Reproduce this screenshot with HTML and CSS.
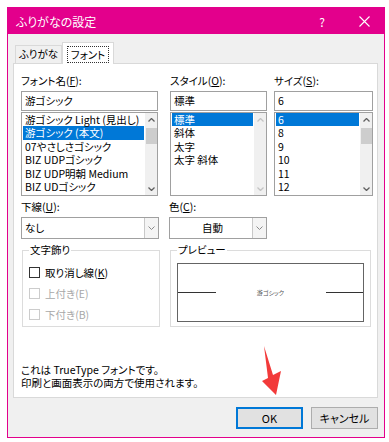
FILE: index.html
```html
<!DOCTYPE html>
<html lang="ja">
  <head>
    <meta charset="UTF-8" />
    <title>ふりがなの設定</title>
    <link rel="stylesheet" href="styles.css">
  </head>
  <body>
    <div class="window">
      <div class="titlebar">
        <span class="title">ふりがなの設定</span>
        <span class="help">?</span>
        <svg class="close" width="11" height="11" viewBox="0 0 11 11">
          <path d="M0.5 0.5 L10.5 10.5 M10.5 0.5 L0.5 10.5" stroke="#fff" stroke-width="1.1" fill="none" />
        </svg>
      </div>

      <div class="body">
        <div class="tabs">
          <div class="tab">ふりがな</div>
          <div class="tab active"><span class="focus">フォント</span></div>
        </div>

        <div class="panel">
          <div class="pickers">
            <div class="col col-font">
              <div class="lbl">フォント名(<u>F</u>):</div>
              <div class="input">游ゴシック</div>
              <div class="listbox">
                <div class="items">
                  <div class="item">游ゴシック Light (見出し)</div>
                  <div class="item sel">游ゴシック (本文)</div>
                  <div class="item">07やさしさゴシック</div>
                  <div class="item">BIZ UDPゴシック</div>
                  <div class="item">BIZ UDP明朝 Medium</div>
                  <div class="item">BIZ UDゴシック</div>
                </div>
                <div class="scroll">
                  <svg class="chev" viewBox="0 0 7 4"><path d="M0.5 3.5 L3.5 0.5 L6.5 3.5" /></svg>
                  <div class="thumb"></div>
                  <div class="spacer"></div>
                  <svg class="chev" viewBox="0 0 7 4"><path d="M0.5 0.5 L3.5 3.5 L6.5 0.5" /></svg>
                </div>
              </div>
            </div>

            <div class="col col-style">
              <div class="lbl">スタイル(<u>O</u>):</div>
              <div class="input">標準</div>
              <div class="listbox">
                <div class="items">
                  <div class="item sel">標準</div>
                  <div class="item">斜体</div>
                  <div class="item">太字</div>
                  <div class="item">太字 斜体</div>
                </div>
                <div class="scroll off">
                  <svg class="chev" viewBox="0 0 7 4"><path d="M0.5 3.5 L3.5 0.5 L6.5 3.5" /></svg>
                  <div class="spacer"></div>
                  <svg class="chev" viewBox="0 0 7 4"><path d="M0.5 0.5 L3.5 3.5 L6.5 0.5" /></svg>
                </div>
              </div>
            </div>

            <div class="col col-size">
              <div class="lbl">サイズ(<u>S</u>):</div>
              <div class="input">6</div>
              <div class="listbox">
                <div class="items">
                  <div class="item sel">6</div>
                  <div class="item">8</div>
                  <div class="item">9</div>
                  <div class="item">10</div>
                  <div class="item">11</div>
                  <div class="item">12</div>
                </div>
                <div class="scroll">
                  <svg class="chev" viewBox="0 0 7 4"><path d="M0.5 3.5 L3.5 0.5 L6.5 3.5" /></svg>
                  <div class="thumb"></div>
                  <div class="spacer"></div>
                  <svg class="chev" viewBox="0 0 7 4"><path d="M0.5 0.5 L3.5 3.5 L6.5 0.5" /></svg>
                </div>
              </div>
            </div>
          </div>

          <div class="combos">
            <div class="col col-under">
              <div class="lbl">下線(<u>U</u>):</div>
              <div class="drop">
                <span class="drop-text">なし</span>
                <span class="drop-btn"><svg class="chev" viewBox="0 0 7 4"><path d="M0.5 0.5 L3.5 3.5 L6.5 0.5" /></svg></span>
              </div>
            </div>
            <div class="col col-color">
              <div class="lbl">色(<u>C</u>):</div>
              <div class="drop">
                <span class="drop-text center">自動</span>
                <span class="drop-btn"><svg class="chev" viewBox="0 0 7 4"><path d="M0.5 0.5 L3.5 3.5 L6.5 0.5" /></svg></span>
              </div>
            </div>
          </div>

          <div class="groups">
            <fieldset class="group group-deco">
              <legend>文字飾り</legend>
              <div class="checks">
                <label class="check"><span class="box"></span>取り消し線(<u>K</u>)</label>
                <label class="check off"><span class="box"></span>上付き(E)</label>
                <label class="check off"><span class="box"></span>下付き(B)</label>
              </div>
            </fieldset>
            <fieldset class="group group-preview">
              <legend>プレビュー</legend>
              <div class="preview">
                <span class="rule"></span>
                <span class="sample">游ゴシック</span>
                <span class="rule"></span>
              </div>
            </fieldset>
          </div>

          <p class="note">これは TrueType フォントです。<br>印刷と画面表示の両方で使用されます。</p>
        </div>

        <div class="actions">
          <button class="btn ok">OK</button>
          <button class="btn">キャンセル</button>
        </div>
      </div>
    </div>

    <svg class="pointer" width="389" height="442" viewBox="0 0 389 442">
      <polygon points="264,346 273,375 281,371 276,395 262,381 268,378" fill="#f23a3a" />
    </svg>
  </body>
</html>
```

FILE: styles.css
```css
body {
  margin: 0;
  background: #fff;
  font-family: "Noto Sans CJK JP", "Noto Sans", sans-serif;
  font-size: 10.5px;
  font-feature-settings: "palt";
  color: #000;
}
.window {
  margin: 7px 0 0 7px;
  width: 376px;
  height: 429px;
  border: 1px solid #e3008c;
  background: #f0f0f0;
  display: flex;
  flex-direction: column;
}
.titlebar {
  height: 26px;
  background: #e3008c;
  color: #fff;
  display: flex;
  align-items: center;
  padding-left: 8px;
  font-size: 12px;
}
.title {
  flex: 1;
}
.help {
  font-size: 12px;
  margin-right: 34px;
}
.close {
  margin-right: 14px;
}
.body {
  flex: 1;
  padding: 8px 5px 0 5px;
}
.tabs {
  display: flex;
  height: 21px;
  padding-left: 2px;
}
.tab {
  box-sizing: border-box;
  height: 18px;
  margin-top: 3px;
  width: 47px;
  border: 1px solid #d9d9d9;
  border-bottom: none;
  line-height: 16px;
  text-align: center;
  background: #f0f0f0;
}
.tab.active {
  position: relative;
  z-index: 1;
  margin-top: 0;
  height: 22px;
  width: 52px;
  background: #fff;
  padding-top: 4px;
  line-height: 14px;
}
.focus {
  display: inline-block;
  outline: 1px dotted #333;
  padding: 0 3px;
  line-height: 15px;
}
.panel {
  box-sizing: border-box;
  width: 365px;
  height: 335px;
  background: #fff;
  border: 1px solid #d9d9d9;
  padding: 10px 0 0 7px;
}
.pickers,
.combos,
.groups {
  display: flex;
}
.lbl {
  line-height: 14px;
  height: 14px;
  margin-bottom: 3px;
}
.col-font { width: 137px; }
.col-style { width: 97px; margin-left: 12px; }
.col-size { width: 99px; margin-left: 7px; }
.input {
  box-sizing: border-box;
  height: 20px;
  border: 1px solid #a0a0a0;
  padding-left: 3px;
  line-height: 18px;
  margin-bottom: 1px;
  white-space: nowrap;
}
.listbox {
  box-sizing: border-box;
  height: 84px;
  border: 1px solid #a0a0a0;
  display: flex;
  overflow: hidden;
}
.items {
  flex: 1;
  padding: 0 1px;
  overflow: hidden;
}
.item {
  height: 13.4px;
  line-height: 13.4px;
  padding-left: 2px;
  white-space: nowrap;
}
.item.sel {
  background: #0078d7;
  color: #fff;
}
.scroll {
  width: 12px;
  background: #f0f0f0;
  display: flex;
  flex-direction: column;
  align-items: center;
  padding: 5px 0 4px;
}
.chev {
  width: 7px;
  height: 4px;
  fill: none;
  stroke: #606060;
  stroke-width: 1.3;
}
.scroll.off .chev {
  stroke: #c4c4c4;
}
.thumb {
  width: 11px;
  height: 16px;
  margin-top: 6px;
  background: #cdcdcd;
}
.spacer {
  flex: 1;
}
.combos {
  margin-top: 4px;
}
.col-under { width: 138px; }
.col-color { width: 98px; margin-left: 10px; }
.drop {
  box-sizing: border-box;
  height: 22px;
  border: 1px solid #a0a0a0;
  display: flex;
}
.drop-text {
  flex: 1;
  line-height: 20px;
  padding-left: 3px;
}
.drop-text.center {
  text-align: center;
}
.drop-btn {
  width: 13px;
  border-left: 1px solid #c8c8c8;
  background: #f4f4f4;
  display: flex;
  align-items: center;
  justify-content: center;
}
.drop-btn .chev {
  stroke: #8a8a8a;
  stroke-width: 1;
}
.groups {
  margin-top: 4px;
}
.group {
  box-sizing: border-box;
  height: 84px;
  margin: 0;
  padding: 0 6px;
  border: 1px solid #dcdcdc;
  min-width: 0;
}
.group legend {
  padding: 0 1px;
  line-height: 14px;
}
.group-deco {
  width: 138px;
  margin-left: 1px;
}
.group-preview {
  width: 201px;
  margin-left: 10px;
}
.checks {
  margin-top: 5px;
}
.check {
  display: flex;
  align-items: center;
  height: 21px;
}
.box {
  box-sizing: border-box;
  width: 11px;
  height: 11px;
  border: 1px solid #333;
  margin-right: 5px;
  background: #fff;
}
.check.off {
  color: #a8a8a8;
}
.check.off .box {
  border-color: #cccccc;
}
.preview {
  box-sizing: border-box;
  height: 59px;
  margin-top: 6px;
  border: 1px solid #646464;
  display: flex;
  align-items: center;
}
.rule {
  flex: 1;
  height: 1px;
  background: #333;
}
.sample {
  width: 110px;
  text-align: center;
  font-size: 6px;
  color: #555;
}
.note {
  margin: 36px 0 0;
  line-height: 13px;
}
.actions {
  display: flex;
  justify-content: flex-end;
  gap: 8px;
  margin-top: 9px;
  padding-right: 1px;
}
.btn {
  box-sizing: border-box;
  width: 67px;
  height: 22px;
  border: 1px solid #adadad;
  background: #e1e1e1;
  font-family: inherit;
  font-size: 11px;
  font-feature-settings: "palt";
  padding: 0;
}
.btn.ok {
  border: 2px solid #0078d7;
}
.pointer {
  position: absolute;
  left: 0;
  top: 0;
  pointer-events: none;
}
```
